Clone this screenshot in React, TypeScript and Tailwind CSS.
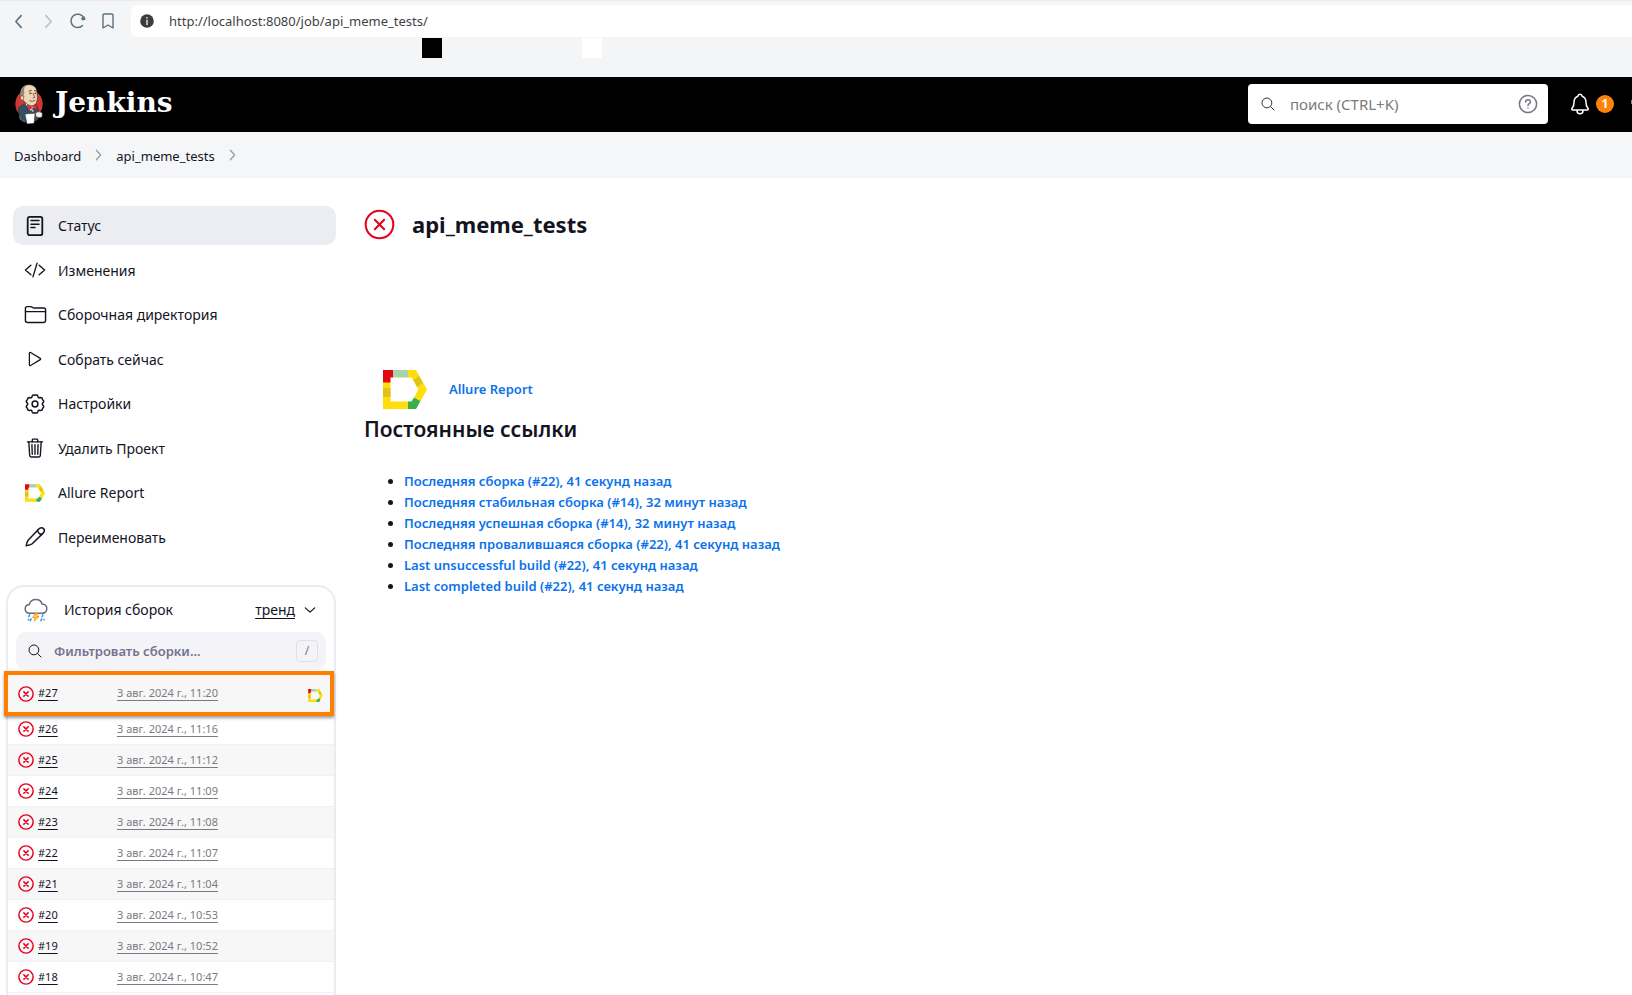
import React from "react";
import {
  IoCodeSlashOutline,
  IoFolderOutline,
  IoNotificationsOutline,
  IoPlayOutline,
  IoSearchOutline,
  IoTrashOutline,
} from "react-icons/io5";

function AllureLogo({ className }: { className: string }) {
  return (
    <svg viewBox="0 0 44 39" className={className} aria-hidden="true">
      <path d="M0 12H7.500V31.500H25V39H0Z" fill="#ffde0a" />
      <path d="M0 18H7.500V27H0Z" fill="#dfc31b" />
      <path d="M0 0H10V7.500H7.500V12.500H0Z" fill="#e30613" />
      <path d="M10 0H25V7.500H10Z" fill="#a7d3a6" />
      <path d="M25 0H33L44 19.500 37.500 31 31 27.500 35.500 19.500 28.500 7.500H25Z" fill="#ffde0a" />
      <path d="M30.500 10 36 6 40 13 34 17Z" fill="#dfc31b" />
      <path d="M31 27.500 37.500 31 33 39H25V31.500H28.500Z" fill="#3fae49" />
    </svg>
  );
}

function FailIcon({ className, stroke, arm }: { className: string; stroke: number; arm: number }) {
  const a = 12 - arm;
  const b = 12 + arm;
  return (
    <svg viewBox="0 0 24 24" className={className} fill="none" stroke="#e6001f" strokeWidth={stroke} strokeLinecap="round" role="img" aria-label="Failed">
      <circle cx="12" cy="12" r="10.700" />
      <path d={`M${a} ${a}L${b} ${b}M${b} ${a}L${a} ${b}`} />
    </svg>
  );
}

function DocumentIcon() {
  return (
    <svg viewBox="0 0 22 22" className="size-[22px]" fill="none" stroke="currentColor" strokeLinecap="round" aria-hidden="true">
      <rect x="3.700" y="1.800" width="14.600" height="18.400" rx="2" strokeWidth="1.800" />
      <path d="M7 5.600H15M7 9.200H15M7 12.600H11" strokeWidth="1.500" />
    </svg>
  );
}

function GearIcon() {
  const points: string[] = [];
  for (let i = 0; i < 72; i++) {
    const t = (i / 72) * Math.PI * 2;
    const r = 8.5 + 0.8 * Math.cos(6 * t) - 0.5 * Math.cos(12 * t);
    points.push(`${(11 + r * Math.sin(t)).toFixed(2)} ${(11 - r * Math.cos(t)).toFixed(2)}`);
  }
  return (
    <svg viewBox="0 0 22 22" className="size-[22px]" fill="none" stroke="currentColor" strokeWidth="1.500" strokeLinejoin="round" aria-hidden="true">
      <path d={`M${points.join("L")}Z`} />
      <circle cx="11" cy="11" r="2.900" />
    </svg>
  );
}

function PencilIcon() {
  return (
    <svg viewBox="0 0 22 22" className="size-[22px]" fill="none" stroke="currentColor" strokeWidth="1.500" strokeLinecap="round" strokeLinejoin="round" aria-hidden="true">
      <path d="M2.200 19.800C2.600 17.400 3.200 15.200 4.300 13.900L14.800 3C16.200 1.600 18.400 1.500 19.500 2.600 20.600 3.700 20.500 5.700 19.100 7.100L8.200 17.700C6.900 18.800 4.600 19.400 2.200 19.800Z" />
      <path d="M13.600 4.300C14 6.700 15.400 8.100 17.800 8.400" />
    </svg>
  );
}

function StormIcon() {
  return (
    <svg viewBox="0 0 24 24" className="size-6" fill="none" strokeLinecap="round" strokeLinejoin="round" aria-hidden="true">
      <path d="M6 15.200C3 15.200 1.200 13.300 1.200 10.900 1.200 8.500 2.800 6.900 5.200 6.600 6 3.500 8.500 1.500 11.800 1.500 15 1.500 17.300 3.300 18 6 20.900 6.200 22.800 8 22.800 10.600 22.800 13.300 21 15.200 18.200 15.200Z" stroke="#6b6880" strokeWidth="1.500" />
      <path d="M11 16 8.500 19.600H11.200L10.400 23 15 18.500H12.400L14 16Z" stroke="#fe9a2a" fill="#ffd34d" strokeWidth="1" />
      <path d="M5.500 17 4.800 18.500M18.800 17 18.100 18.500M7 21 6.300 22.500M4.400 21.500V21.800M17.600 21 17 22.500M20 21.500V21.800" stroke="#2ea2f0" strokeWidth="1.700" />
    </svg>
  );
}

function ButlerLogo() {
  return (
    <svg viewBox="0 0 84 120" className="h-10 w-7" aria-hidden="true">
      <ellipse cx="42" cy="60" rx="41" ry="43" fill="#d33833" />
      <path d="M13 104C16 92 8 84 10 70L34 56 62 62C71 68 72 86 70 106L56 114H28Z" fill="#335061" stroke="#1b2a34" strokeWidth="1.500" />
      <path d="M20 36C14 18 24 3 41 2 57 1 66 12 66 27 68 42 68 54 60 62 50 70 36 64 32 56 25 52 21 46 20 36Z" fill="#f0d6b7" stroke="#3a2b22" strokeWidth="2" />
      <path d="M17 38C12 20 22 7 33 3 26 12 27 20 28 27L23 41Z" fill="#8f8982" />
      <path d="M19 36C14 38 16 50 24 49L27 36Z" fill="#f0d6b7" stroke="#3a2b22" strokeWidth="1.500" />
      <path d="M41 22 50 19M57 19 64 22" fill="none" stroke="#3a2b22" strokeWidth="2.500" />
      <path d="M43 28H50M58 28H63" fill="none" stroke="#3a2b22" strokeWidth="3" />
      <path d="M54 28 59 40 53 42M43 50C50 53 56 52 61 48" fill="none" stroke="#3a2b22" strokeWidth="2" />
      <path d="M30 58 46 80 66 64 52 68Z" fill="#fff" />
      <path d="M37 61 51 68 65 61 67 78 52 72 39 79Z" fill="#d33833" stroke="#7a1512" strokeWidth="1.500" />
      <circle cx="52" cy="70" r="3.500" fill="#ef6a65" />
      <circle cx="53" cy="80" r="3" fill="#c9d6df" />
      <path d="M30 90 60 88 57 118 36 120Z" fill="#fff" stroke="#3a2b22" strokeWidth="1.500" />
      <path d="M62 88C66 82 76 82 82 88L81 99C73 103 66 100 62 96Z" fill="#f3eee8" stroke="#3a2b22" strokeWidth="1.500" />
      <path d="M12 94 18 108 30 115" fill="none" stroke="#6d8595" strokeWidth="2" />
    </svg>
  );
}

function Chevron({ className }: { className: string }) {
  return (
    <svg viewBox="0 0 8 14" className={className} fill="none" stroke="currentColor" strokeLinecap="round" strokeLinejoin="round" aria-hidden="true">
      <path d="M1.500 1.500 6.500 7 1.500 12.500" strokeWidth="1.500" />
    </svg>
  );
}

const tasks = [
  { label: "Статус", icon: <DocumentIcon />, active: true },
  { label: "Изменения", icon: <IoCodeSlashOutline className="size-[22px]" /> },
  { label: "Сборочная директория", icon: <IoFolderOutline className="size-[23px]" /> },
  { label: "Собрать сейчас", icon: <IoPlayOutline className="size-5" /> },
  { label: "Настройки", icon: <GearIcon /> },
  { label: "Удалить Проект", icon: <IoTrashOutline className="size-[22px]" /> },
  { label: "Allure Report", icon: <AllureLogo className="h-[18px] w-5" /> },
  { label: "Переименовать", icon: <PencilIcon /> },
];

const builds = [
  { id: 26, time: "11:16" },
  { id: 25, time: "11:12" },
  { id: 24, time: "11:09" },
  { id: 23, time: "11:08" },
  { id: 22, time: "11:07" },
  { id: 21, time: "11:04" },
  { id: 20, time: "10:53" },
  { id: 19, time: "10:52" },
  { id: 18, time: "10:47" },
];

const permalinks = [
  "Последняя сборка (#22), 41 секунд назад",
  "Последняя стабильная сборка (#14), 32 минут назад",
  "Последняя успешная сборка (#14), 32 минут назад",
  "Последняя провалившаяся сборка (#22), 41 секунд назад",
  "Last unsuccessful build (#22), 41 секунд назад",
  "Last completed build (#22), 41 секунд назад",
];

function BuildCells({ id, time }: { id: number; time: string }) {
  return (
    <>
      <a href={`#build-${id}`} className="flex w-[99px] shrink-0 items-center gap-1 text-[#14141f]">
        <FailIcon className="size-4" stroke={2.2} arm={3.2} />
        <span className="underline underline-offset-3">#{id}</span>
      </a>
      <a href={`#build-${id}`} className="text-[#7a7a80] underline underline-offset-3">
        3 авг. 2024 г., {time}
      </a>
    </>
  );
}

function BrowserBar() {
  return (
    <div className="h-[77px] border-t border-[#e9ebee] bg-[#f3f5f7]">
      <div className="flex items-center pt-1 pl-3 text-[#5b7380]">
        <div className="flex w-[119px] items-center">
          <button type="button" aria-label="Back" className="flex w-3 items-center justify-center">
            <Chevron className="h-[15px] w-[9px] rotate-180" />
          </button>
          <button type="button" aria-label="Forward" className="ml-[18px] flex w-3 items-center justify-center text-[#b9c2c8]">
            <Chevron className="h-[15px] w-[9px]" />
          </button>
          <button type="button" aria-label="Reload" className="ml-4">
            <svg viewBox="0 0 16 16" className="size-4" fill="none" stroke="currentColor" strokeWidth="1.500">
              <path d="M12.800 12.300A6.700 6.700 0 1 1 13.600 4.600" />
              <path d="M10.800 5.200 14.600 3.200 15.600 6.800 12.400 7.600Z" fill="currentColor" stroke="none" />
            </svg>
          </button>
          <button type="button" aria-label="Bookmark" className="ml-4">
            <svg viewBox="0 0 12 16" className="h-4 w-3" fill="none" stroke="currentColor" strokeWidth="1.400" strokeLinejoin="round">
              <path d="M1 2.200Q1 1 2.200 1H9.800Q11 1 11 2.200V15L6 12 1 15Z" />
            </svg>
          </button>
        </div>
        <div className="flex h-8 flex-1 items-center gap-[15px] rounded-l-md bg-white pl-[9px]">
          <svg viewBox="0 0 14 14" className="size-[14px]" aria-hidden="true">
            <circle cx="7" cy="7" r="6.800" fill="#3c3c3c" />
            <path d="M6.200 3H7.800V4.600H6.200ZM6.200 5.800H7.800V11H6.200Z" fill="#d5d5d5" />
          </svg>
          <input aria-label="Address" defaultValue="http://localhost:8080/job/api_meme_tests/" className="min-w-0 flex-1 pt-px text-[13px] text-[#3f3f46] outline-none" />
        </div>
      </div>
      <div className="flex gap-[140px] pt-px pl-[422px]">
        <span className="size-5 bg-black" />
        <span className="size-5 bg-white" />
      </div>
    </div>
  );
}

export default function App() {
  return (
    <div className="flex min-h-screen flex-col overflow-hidden bg-white font-['Noto_Sans',sans-serif] text-[#14141f]">
      <BrowserBar />
      <header className="flex h-[55px] items-center bg-black pb-px pl-[15px]">
        <a href="#home" className="flex items-center gap-3 text-white">
          <ButlerLogo />
          <span className="pb-[2px] font-['DejaVu_Serif',serif] text-[28px] leading-8 font-bold">Jenkins</span>
        </a>
        <label className="ml-auto flex h-10 w-[300px] items-center rounded bg-white pr-[10px] pl-3">
          <IoSearchOutline className="size-4 text-[#333340]" />
          <input aria-label="поиск" placeholder="поиск (CTRL+K)" className="min-w-0 flex-1 pl-[14px] text-[15px] outline-none placeholder:text-[#7b7b7b]" />
          <svg viewBox="0 0 20 20" className="size-5" fill="none" stroke="#73738c" strokeWidth="1.500" strokeLinecap="round" aria-hidden="true">
            <circle cx="10" cy="10" r="8.600" />
            <path d="M7.600 8C7.600 6.500 8.700 5.700 10 5.700S12.400 6.500 12.400 7.900C12.400 9.500 10 9.700 10 11.400M10 14V14.100" />
          </svg>
        </label>
        <button type="button" aria-label="Notifications" className="flex items-center gap-1 pl-5 text-white">
          <IoNotificationsOutline className="size-6" />
          <span className="flex size-[18px] items-center justify-center rounded-full bg-[#ff820a] text-[12px] font-bold">1</span>
        </button>
        <span className="mb-1 ml-[17px] h-1 w-px bg-[#888]" />
      </header>
      <nav className="flex h-[46px] items-center gap-[14px] bg-[#f5f6f8] pt-[3px] pl-[14px] text-[13px]">
        <a href="#dashboard">Dashboard</a>
        <Chevron className="mb-1 h-3 w-[7px] text-[#9a9aac]" />
        <a href="#job">api_meme_tests</a>
        <Chevron className="mb-1 h-3 w-[7px] text-[#9a9aac]" />
      </nav>

      <div className="flex flex-1">
        <aside className="flex w-[336px] shrink-0 flex-col pt-7">
          <ul className="flex h-[351px] flex-col justify-between pl-[13px]">
            {tasks.map((t) => (
              <li key={t.label}>
                <a
                  href="#task"
                  className={
                    t.active
                      ? "flex h-[39px] items-center gap-[11px] rounded-[10px] bg-[#ecedf3] pl-[10px] text-[14px]"
                      : "flex h-[39px] items-center gap-[11px] pl-[10px] text-[14px]"
                  }
                >
                  <span className="flex w-6 shrink-0 items-center justify-center">{t.icon}</span>
                  {t.label}
                </a>
              </li>
            ))}
          </ul>

          <section className="mt-7 ml-[6px] flex-1 rounded-t-[18px] border-x-2 border-t-2 border-[#ebebf3]">
            <div className="flex h-[45px] items-center pr-[18px] pl-4">
              <StormIcon />
              <h2 className="flex-1 pl-4 text-[14px]">История сборок</h2>
              <a href="#trend" className="flex items-center gap-[9px] text-[14px]">
                <span className="underline underline-offset-3">тренд</span>
                <Chevron className="h-3 w-3 rotate-90" />
              </a>
            </div>
            <label className="mr-2 ml-2 flex h-[38px] items-center rounded-[10px] bg-[#f3f3f8] pr-2 pl-[11px]">
              <IoSearchOutline className="size-4" />
              <input aria-label="Фильтровать сборки" placeholder="Фильтровать сборки..." className="min-w-0 flex-1 pt-[2px] pl-[11px] text-[13px] font-semibold outline-none placeholder:text-[#73738c]" />
              <kbd className="flex size-[22px] items-center justify-center rounded border border-[#dfdfe8] font-['Noto_Sans',sans-serif] text-[12px] text-[#73738c]">/</kbd>
            </label>
            <div className="relative mt-px -ml-1 flex h-[45px] items-center border-4 border-[#ff8000] bg-[#f7f7f8] pr-[7px] pl-[10px] text-[11px] shadow-[0_2px_3px_rgba(0,0,0,0.4)]">
              <BuildCells id={27} time="11:20" />
              <AllureLogo className="mt-1 ml-auto h-[13px] w-[15px]" />
            </div>
            <ul className="-mt-[2px] text-[11px]">
              {builds.map((b, i) => (
                <li
                  key={b.id}
                  className={
                    i % 2
                      ? "flex h-[31px] items-center border-b border-[#f1f1f4] bg-[#f7f7f8] pl-[10px]"
                      : "flex h-[31px] items-center border-b border-[#f1f1f4] pl-[10px]"
                  }
                >
                  <BuildCells id={b.id} time={b.time} />
                </li>
              ))}
            </ul>
          </section>
        </aside>

        <main className="min-w-0 flex-1 pt-7 pl-[28px]">
          <h1 className="flex h-9 items-center gap-[17px] text-[22px] font-bold">
            <FailIcon className="size-[31px]" stroke={1.6} arm={3.6} />
            api_meme_tests
          </h1>
          <a href="#allure" className="mt-[128px] ml-[19px] flex items-center gap-[22px] text-[13px] font-semibold text-[#0b72ec]">
            <AllureLogo className="h-[39px] w-11" />
            Allure Report
          </a>
          <h2 className="pt-1 text-[21px] leading-8 font-semibold">Постоянные ссылки</h2>
          <ul className="list-disc pt-[26px] pl-10 text-[13px] leading-[21px] font-semibold">
            {permalinks.map((p) => (
              <li key={p}>
                <a href="#build" className="text-[#0b72ec]">{p}</a>
              </li>
            ))}
          </ul>
        </main>
      </div>
    </div>
  );
}
